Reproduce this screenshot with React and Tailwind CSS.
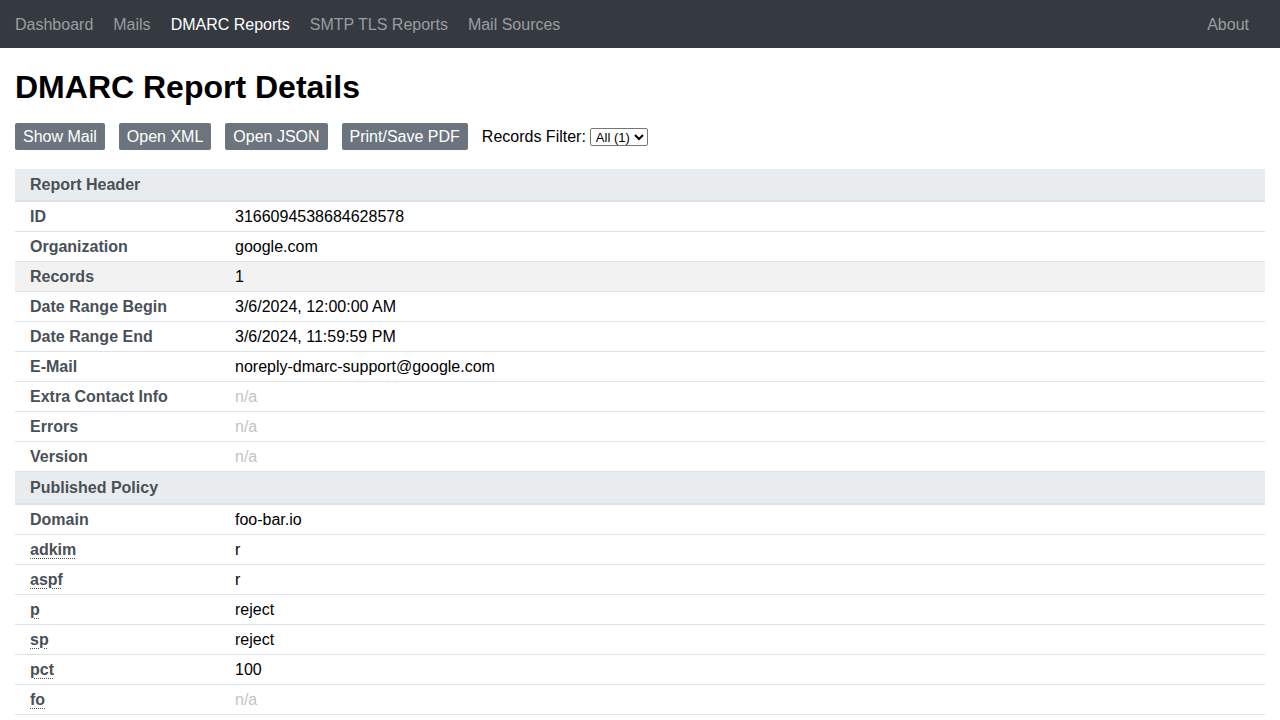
import React from "react";

const font = { fontFamily: '"Liberation Sans", Arial, Helvetica, sans-serif' };

function Abbr({ children }) {
  return (
    <span className="underline decoration-dotted decoration-1 underline-offset-[3px]">{children}</span>
  );
}

const sections = [
  {
    title: "Report Header",
    rows: [
      ["ID", "3166094538684628578"],
      ["Organization", "google.com"],
      ["Records", "1", true],
      ["Date Range Begin", "3/6/2024, 12:00:00 AM"],
      ["Date Range End", "3/6/2024, 11:59:59 PM"],
      ["E-Mail", "noreply-dmarc-support@google.com"],
      ["Extra Contact Info", null],
      ["Errors", null],
      ["Version", null],
    ],
  },
  {
    title: "Published Policy",
    rows: [
      ["Domain", "foo-bar.io"],
      [<Abbr>adkim</Abbr>, "r"],
      [<Abbr>aspf</Abbr>, "r"],
      [<Abbr>p</Abbr>, "reject"],
      [<Abbr>sp</Abbr>, "reject"],
      [<Abbr>pct</Abbr>, "100"],
      [<Abbr>fo</Abbr>, null],
    ],
  },
];

export default function App() {
  return (
    <div className="min-h-screen bg-white text-black text-[16px]" style={font}>
      <nav className="h-[48px] bg-[#343a40] flex items-center px-[15px] pt-[2px]">
        <div className="flex items-center gap-[20px] text-[16px]">
          <span className="text-[#9a9da0]">Dashboard</span>
          <span className="text-[#9a9da0]">Mails</span>
          <span className="text-white">DMARC Reports</span>
          <span className="text-[#9a9da0]">SMTP TLS Reports</span>
          <span className="text-[#9a9da0]">Mail Sources</span>
        </div>
        <span className="ml-auto mr-[16px] text-[#9a9da0]">About</span>
      </nav>
      <main className="px-[15px]">
        <h1 className="text-[32px] font-bold leading-[40px] pt-[19px]">DMARC Report Details</h1>
        <div className="flex items-center mt-[16px] h-[27px]">
          {["Show Mail", "Open XML", "Open JSON", "Print/Save PDF"].map((b) => (
            <span
              key={b}
              className="bg-[#6c757d] text-white h-[27px] leading-[27px] px-[8px] rounded-[2px] mr-[14px]"
            >
              {b}
            </span>
          ))}
          <span>Records Filter:</span>
          <select className="ml-[4px] text-[13px] border border-[#767676] rounded-[2px] h-[18px] leading-[16px] px-[1px] bg-white">
            <option>All (1)</option>
          </select>
        </div>
        <div className="mt-[19px]">
          {sections.map((s) => (
            <div key={s.title}>
              <div className="h-[33px] bg-[#e9ecef] border-b-2 border-[#dee2e6] flex items-center px-[15px] font-bold text-[#495057]">
                {s.title}
              </div>
              {s.rows.map(([label, value, hl], i) => (
                <div
                  key={i}
                  className={
                    "h-[30px] border-b border-[#dee2e6] flex items-center " +
                    (hl ? "bg-[#f2f2f2]" : "")
                  }
                >
                  <div className="w-[220px] pl-[15px] font-bold text-[#495057]">{label}</div>
                  {value === null ? (
                    <div className="text-[#c0c4c8]">n/a</div>
                  ) : (
                    <div>{value}</div>
                  )}
                </div>
              ))}
            </div>
          ))}
        </div>
      </main>
    </div>
  );
}
